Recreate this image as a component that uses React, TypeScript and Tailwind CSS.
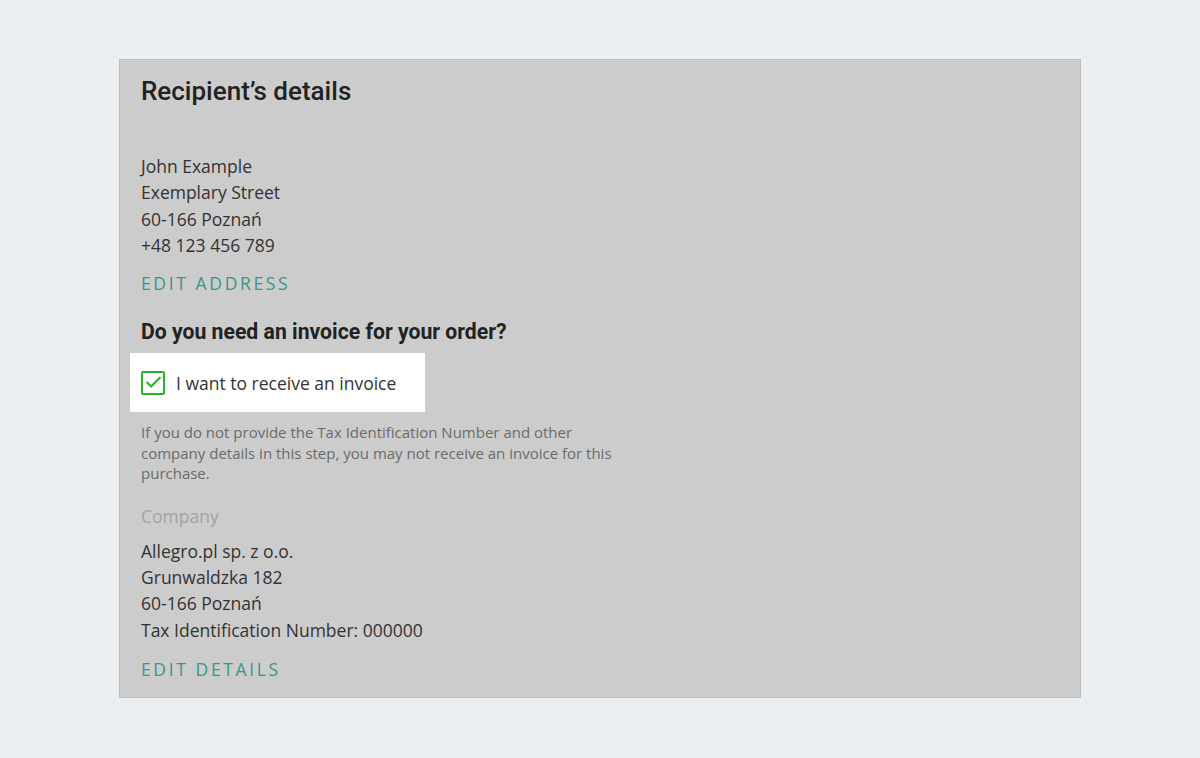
import { Check } from "lucide-react";

const ADDRESS = ["John Example", "Exemplary Street", "60-166 Poznań", "+48 123 456 789"];
const COMPANY = ["Allegro.pl sp. z o.o.", "Grunwaldzka 182", "60-166 Poznań", "Tax Identification Number: 000000"];

const body = "font-['Open_Sans',sans-serif]";
const heading = "font-['Roboto',sans-serif]";

export default function App() {
  return (
    <div className="min-h-[758px] bg-[#eaeef1] pt-[59px] flex justify-center">
      <div className="w-[962px] h-[639px] bg-[#cccccc] border border-[#bdbdbd] pl-[21px] pt-[13px]">
        <h2 className={`${heading} text-[26px] font-medium text-[#222] leading-[36px]`}>Recipient’s details</h2>

        <div className={`${body} mt-[44px] text-[17.5px] leading-[26.3px] text-[#333]`}>
          {ADDRESS.map((l) => (
            <div key={l}>{l}</div>
          ))}
        </div>

        <a className={`${body} block mt-[13px] text-[17.5px] tracking-[0.15em] text-[#3a9788] leading-[24px]`}>EDIT ADDRESS</a>

        <h3 className={`${heading} mt-[23px] text-[21.2px] font-bold text-[#222] leading-[28px]`}>
          Do you need an invoice for your order?
        </h3>

        <div className="-ml-[11px] mt-[7px] w-[295px] h-[59px] bg-white flex items-center pl-[11px] gap-[11px]">
          <span className="w-[24px] h-[24px] border-2 border-[#26b526] rounded-[2px] flex items-center justify-center bg-white">
            <Check size={19} strokeWidth={2.75} className="text-[#26b526]" />
          </span>
          <span className={`${body} text-[17.5px] text-[#333]`}>I want to receive an invoice</span>
        </div>

        <p className={`${body} mt-[10px] w-[482px] text-[15px] leading-[20.5px] text-[#6b6b6b]`}>
          If you do not provide the Tax Identification Number and other company details in this step, you may not
          receive an invoice for this purchase.
        </p>

        <div className={`${body} mt-[19px] text-[17.5px] text-[#a3a3a3] leading-[26px]`}>Company</div>

        <div className={`${body} mt-[9px] text-[17.5px] leading-[26.3px] text-[#333]`}>
          {COMPANY.map((l) => (
            <div key={l}>{l}</div>
          ))}
        </div>

        <a className={`${body} block mt-[14px] text-[17.5px] tracking-[0.15em] text-[#3a9788] leading-[24px]`}>EDIT DETAILS</a>
      </div>
    </div>
  );
}
